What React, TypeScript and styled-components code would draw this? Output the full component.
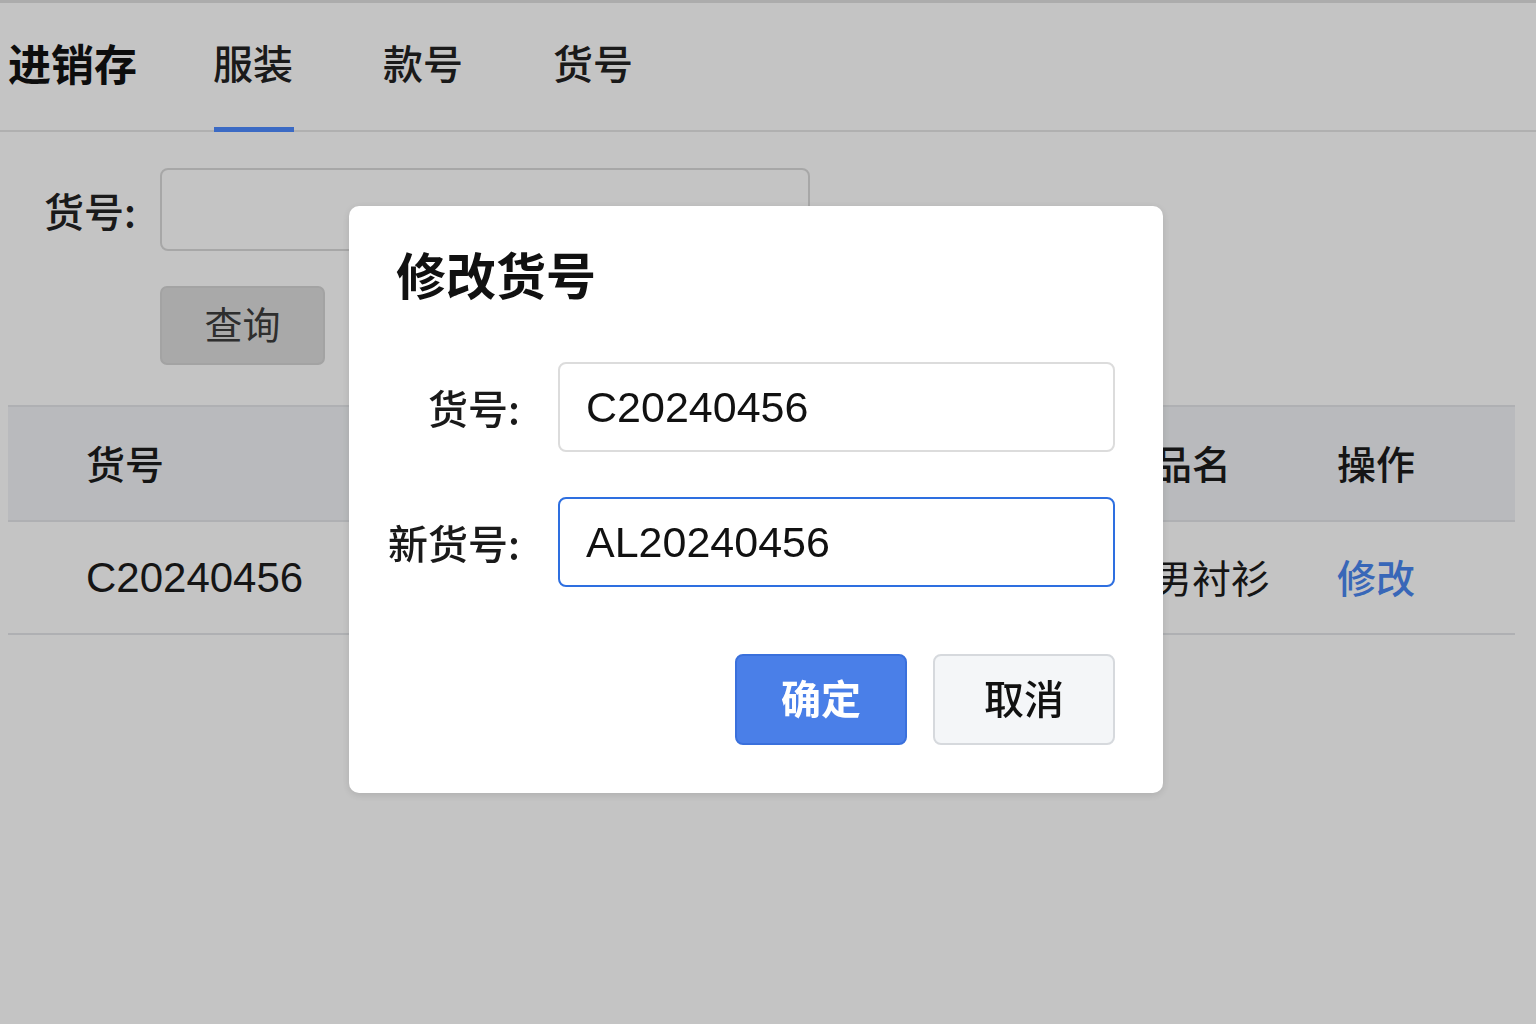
import React from "react";
import styled, { createGlobalStyle } from "styled-components";

const Global = createGlobalStyle`
  html, body { margin: 0; padding: 0; background: #ffffff; }
  body {
    font-family: "Liberation Sans", "Noto Sans CJK SC", sans-serif;
    color: #1a1a1a;
    width: 1536px;
    height: 1024px;
    overflow: hidden;
  }
  * { box-sizing: border-box; }
`;

const Page = styled.div`
  width: 1536px;
  height: 1024px;
  border-top: 3px solid #e0e0e0;
  background: #ffffff;
`;

const Header = styled.header`
  height: 129px;
  display: flex;
  align-items: stretch;
  padding-left: 8px;
  border-bottom: 2px solid #e6e6e6;
`;

const Brand = styled.div`
  display: flex;
  align-items: center;
  padding-bottom: 10px;
  font-family: "Noto Sans CJK SC", sans-serif;
  font-size: 43px;
  font-weight: 700;
  color: #111;
  margin-right: 76px;
`;

const Tabs = styled.nav`
  display: flex;
  gap: 90px;
`;

const Tab = styled.div<{ $active?: boolean }>`
  position: relative;
  display: flex;
  align-items: center;
  padding-bottom: 10px;
  font-family: "Noto Sans CJK SC", sans-serif;
  font-size: 40px;
  font-weight: 500;
  color: #222;
  &::after {
    content: "";
    position: absolute;
    left: 1px;
    right: -1px;
    bottom: -2px;
    height: 5px;
    background: ${(p) => (p.$active ? "#4d8bff" : "transparent")};
  }
`;

const SearchForm = styled.form`
  padding: 36px 0 0 44px;
  display: flex;
  flex-direction: column;
`;

const FieldRow = styled.div`
  display: flex;
  align-items: center;
`;

const SearchLabel = styled.label`
  width: 116px;
  font-family: "Noto Sans CJK SC", sans-serif;
  font-size: 40px;
  font-weight: 500;
  color: #222;
`;

const SearchInput = styled.div`
  width: 650px;
  height: 83px;
  border: 2px solid #dadada;
  border-radius: 8px;
  background: #ffffff;
`;

const QueryButton = styled.button`
  margin: 35px 0 0 116px;
  width: 165px;
  height: 79px;
  border: 2px solid #d4d4d4;
  border-radius: 7px;
  background: #dcdcdc;
  font-family: "Noto Sans CJK SC", sans-serif;
  font-size: 38px;
  line-height: 1;
  color: #3c3c3c;
  padding: 0 0 6px;
`;

const Table = styled.div`
  margin: 40px 0 0 8px;
  width: 1507px;
`;

const Row = styled.div<{ $head?: boolean }>`
  display: grid;
  grid-template-columns: 520px 547px 184px 1fr;
  align-items: center;
  padding-left: 78px;
  height: ${(p) => (p.$head ? "117px" : "113px")};
  background: ${(p) => (p.$head ? "#f1f3f6" : "#ffffff")};
  border-top: ${(p) => (p.$head ? "2px solid #e4e6e9" : "none")};
  border-bottom: 2px solid #e4e6e9;
`;

const HeadCell = styled.div`
  font-family: "Noto Sans CJK SC", sans-serif;
  font-size: 39px;
  font-weight: 500;
  color: #1c1c1c;
  padding-bottom: 4px;
`;

const Cell = styled.div`
  font-family: "Liberation Sans", "Noto Sans CJK SC", sans-serif;
  font-size: 42px;
  color: #1c1c1c;
`;

const CnCell = styled(Cell)`
  font-family: "Noto Sans CJK SC", sans-serif;
  font-size: 39px;
  padding-bottom: 4px;
`;

const LinkCell = styled(CnCell)`
  color: #4a86f0;
  font-weight: 500;
`;

const Backdrop = styled.div`
  position: fixed;
  inset: 0;
  background: rgba(0, 0, 0, 0.23);
`;

const Modal = styled.div`
  position: fixed;
  left: 349px;
  top: 206px;
  width: 814px;
  height: 587px;
  background: #ffffff;
  border-radius: 10px;
  box-shadow: 0 2px 8px rgba(0, 0, 0, 0.12);
  padding: 37px 48px 48px 0;
  display: flex;
  flex-direction: column;
`;

const ModalTitle = styled.h2`
  margin: 0 0 59px 47px;
  height: 60px;
  line-height: 60px;
  font-family: "Noto Sans CJK SC", sans-serif;
  font-size: 50px;
  font-weight: 700;
  color: #111;
`;

const ModalForm = styled.div`
  display: flex;
  flex-direction: column;
  gap: 45px;
`;

const ModalRow = styled.div`
  display: flex;
  align-items: center;
  gap: 38px;
`;

const ModalLabel = styled.label`
  width: 171px;
  text-align: right;
  font-family: "Noto Sans CJK SC", sans-serif;
  font-size: 40px;
  font-weight: 500;
  color: #1a1a1a;
  white-space: nowrap;
`;

const ModalInput = styled.div<{ $focus?: boolean }>`
  flex: 1;
  height: 90px;
  display: flex;
  align-items: center;
  padding-left: 26px;
  border: 2px solid ${(p) => (p.$focus ? "#2e6fe0" : "#dcdcdc")};
  border-radius: 8px;
  background: #fff;
  font-family: "Liberation Sans", sans-serif;
  font-size: 43px;
  color: #111;
`;

const Actions = styled.div`
  margin-top: 67px;
  display: flex;
  justify-content: flex-end;
  gap: 26px;
`;

const Button = styled.button<{ $primary?: boolean }>`
  width: ${(p) => (p.$primary ? "172px" : "182px")};
  height: 91px;
  border-radius: 8px;
  border: 2px solid ${(p) => (p.$primary ? "#3a70dc" : "#d6d9dd")};
  background: ${(p) => (p.$primary ? "#4a7fe8" : "#f4f6f8")};
  color: ${(p) => (p.$primary ? "#ffffff" : "#111")};
  font-family: "Noto Sans CJK SC", sans-serif;
  font-size: 40px;
  line-height: 1;
  font-weight: ${(p) => (p.$primary ? 700 : 500)};
  padding: 0 0 6px;
`;

export default function App() {
  return (
    <>
      <Global />
      <Page>
        <Header>
          <Brand>进销存</Brand>
          <Tabs>
            <Tab $active>服装</Tab>
            <Tab>款号</Tab>
            <Tab>货号</Tab>
          </Tabs>
        </Header>
        <SearchForm>
          <FieldRow>
            <SearchLabel>货号:</SearchLabel>
            <SearchInput />
          </FieldRow>
          <div>
            <QueryButton type="button">查询</QueryButton>
          </div>
        </SearchForm>
        <Table>
          <Row $head>
            <HeadCell>货号</HeadCell>
            <HeadCell />
            <HeadCell>品名</HeadCell>
            <HeadCell>操作</HeadCell>
          </Row>
          <Row>
            <Cell>C20240456</Cell>
            <Cell />
            <CnCell>男衬衫</CnCell>
            <LinkCell>修改</LinkCell>
          </Row>
        </Table>
      </Page>
      <Backdrop />
      <Modal>
        <ModalTitle>修改货号</ModalTitle>
        <ModalForm>
          <ModalRow>
            <ModalLabel>货号:</ModalLabel>
            <ModalInput>C20240456</ModalInput>
          </ModalRow>
          <ModalRow>
            <ModalLabel>新货号:</ModalLabel>
            <ModalInput $focus>AL20240456</ModalInput>
          </ModalRow>
        </ModalForm>
        <Actions>
          <Button $primary type="button">确定</Button>
          <Button type="button">取消</Button>
        </Actions>
      </Modal>
    </>
  );
}
